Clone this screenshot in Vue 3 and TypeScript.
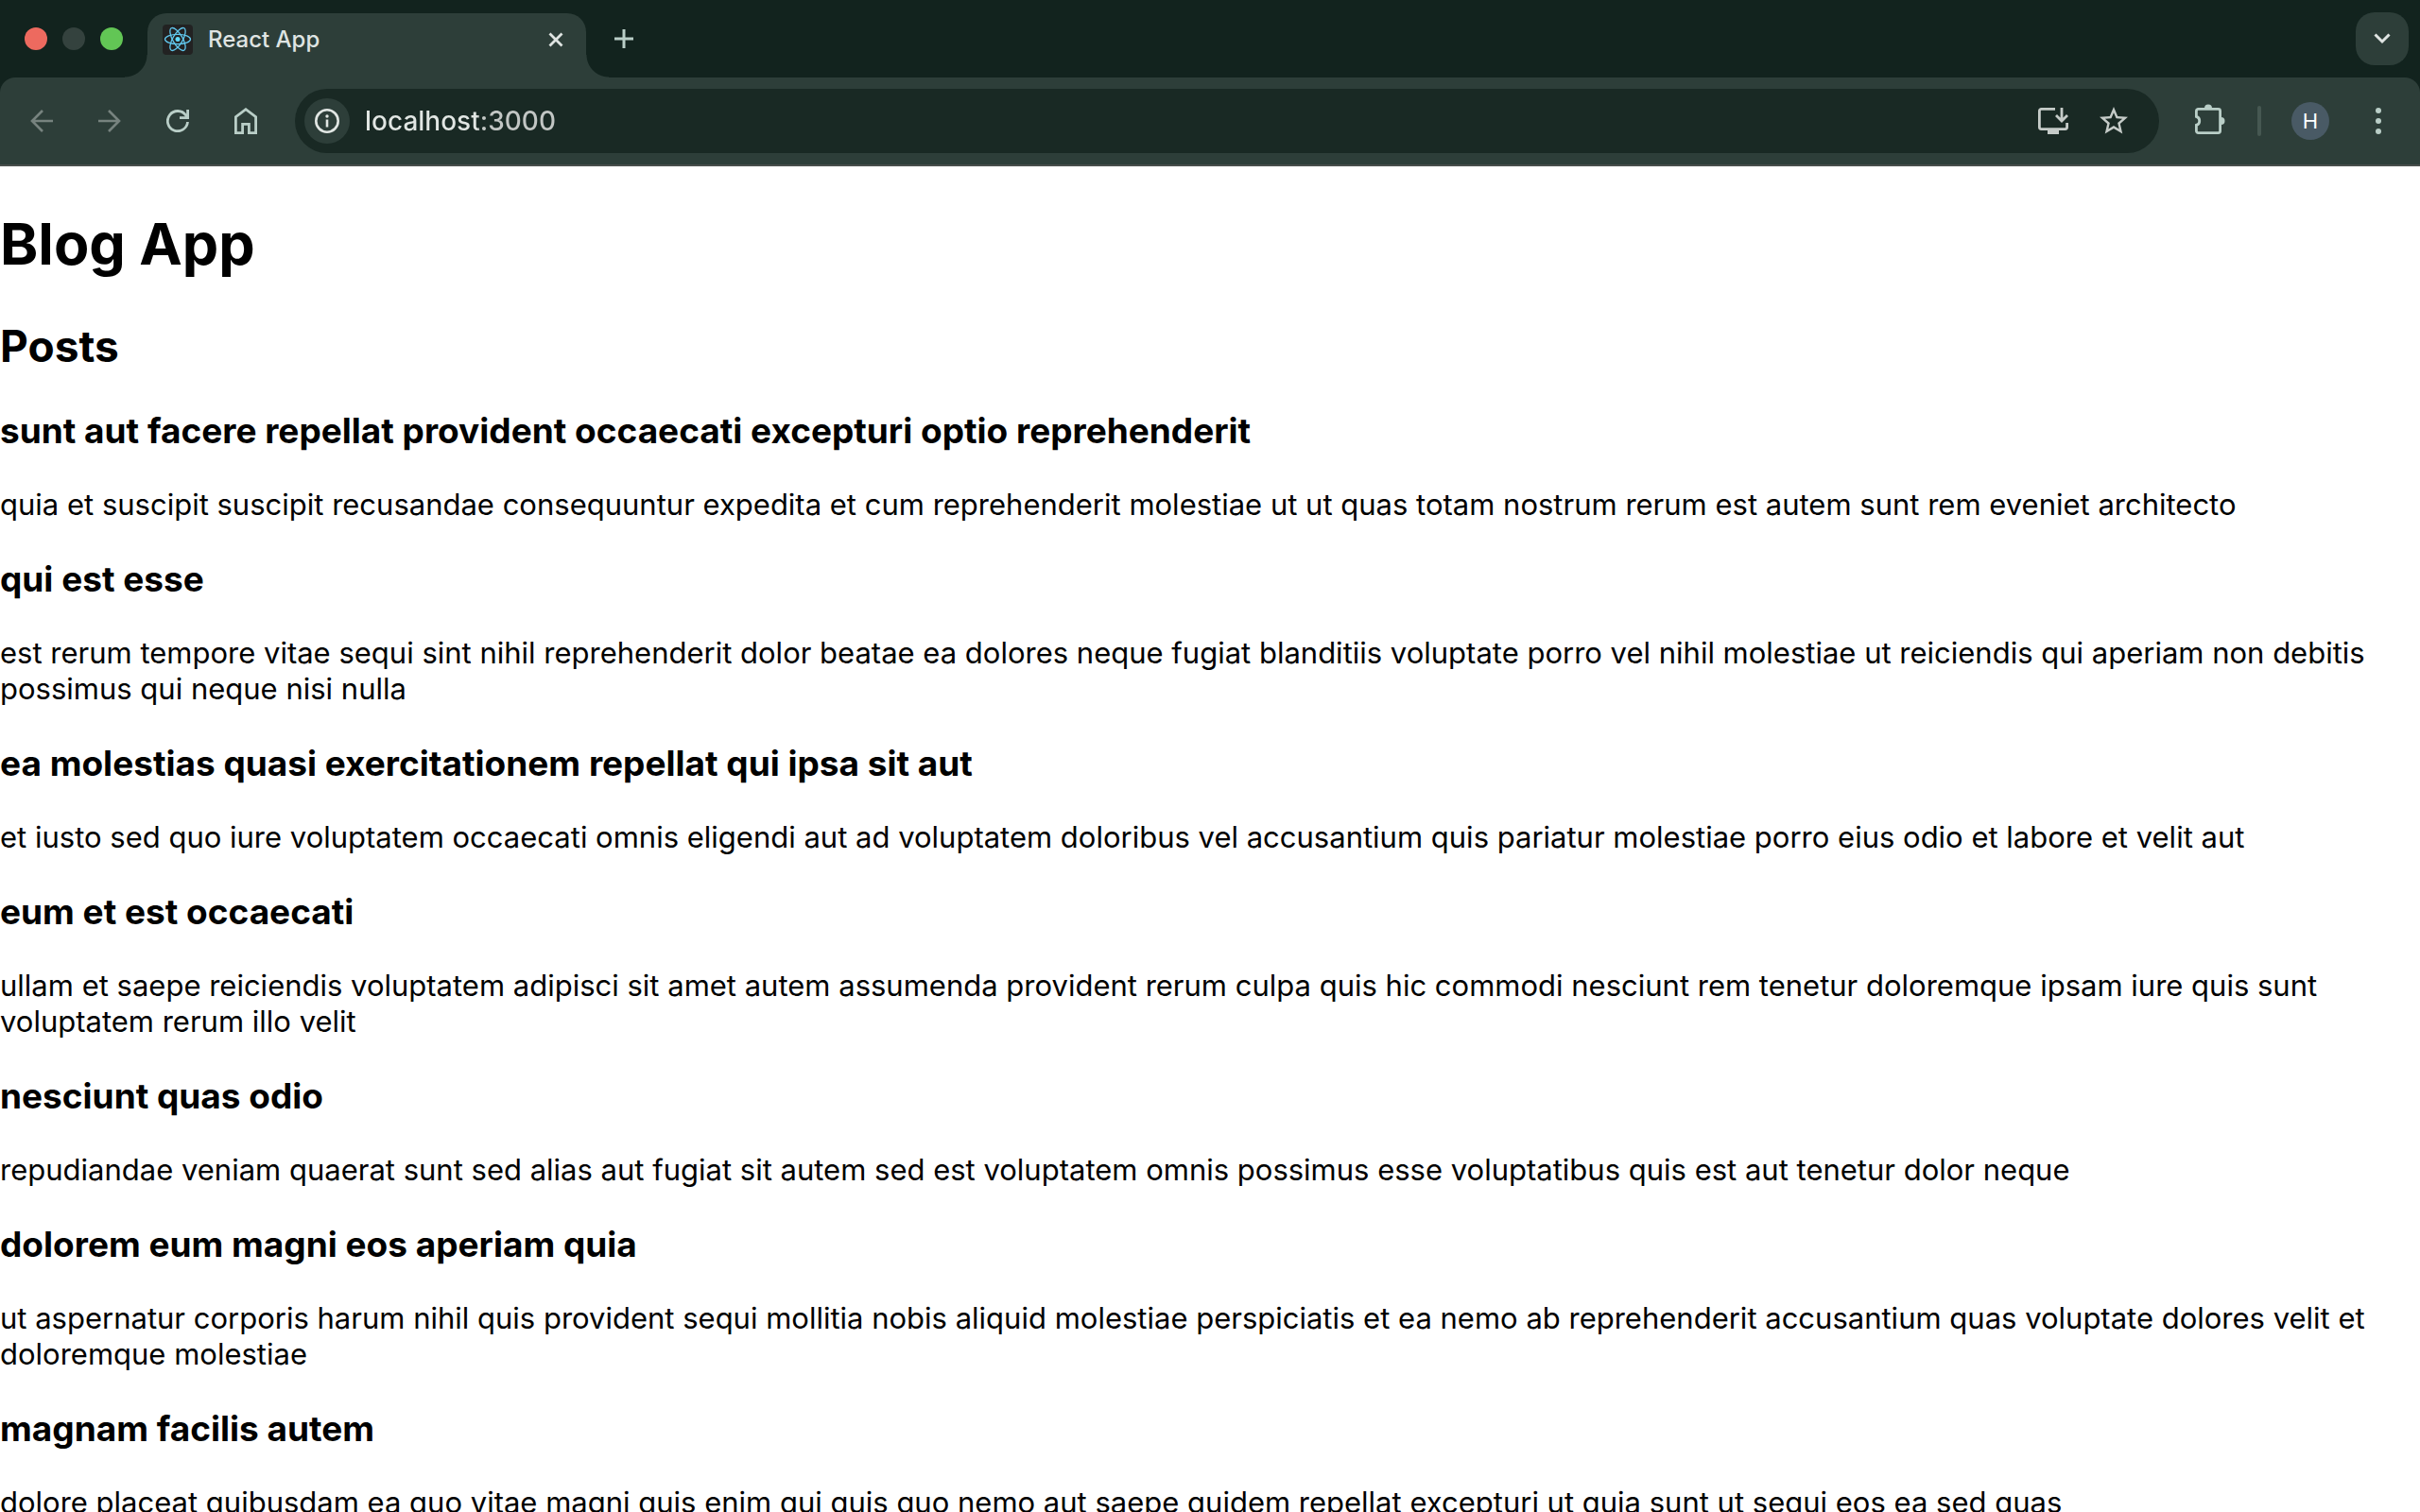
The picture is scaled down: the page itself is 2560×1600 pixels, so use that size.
<script setup lang="ts">
import { ref } from 'vue'

interface Post {
  title: string
  body: string
}

const address = ref('localhost:3000')

const posts: Post[] = [
  {
    title: 'sunt aut facere repellat provident occaecati excepturi optio reprehenderit',
    body: 'quia et suscipit suscipit recusandae consequuntur expedita et cum reprehenderit molestiae ut ut quas totam nostrum rerum est autem sunt rem eveniet architecto',
  },
  {
    title: 'qui est esse',
    body: 'est rerum tempore vitae sequi sint nihil reprehenderit dolor beatae ea dolores neque fugiat blanditiis voluptate porro vel nihil molestiae ut reiciendis qui aperiam non debitis possimus qui neque nisi nulla',
  },
  {
    title: 'ea molestias quasi exercitationem repellat qui ipsa sit aut',
    body: 'et iusto sed quo iure voluptatem occaecati omnis eligendi aut ad voluptatem doloribus vel accusantium quis pariatur molestiae porro eius odio et labore et velit aut',
  },
  {
    title: 'eum et est occaecati',
    body: 'ullam et saepe reiciendis voluptatem adipisci sit amet autem assumenda provident rerum culpa quis hic commodi nesciunt rem tenetur doloremque ipsam iure quis sunt voluptatem rerum illo velit',
  },
  {
    title: 'nesciunt quas odio',
    body: 'repudiandae veniam quaerat sunt sed alias aut fugiat sit autem sed est voluptatem omnis possimus esse voluptatibus quis est aut tenetur dolor neque',
  },
  {
    title: 'dolorem eum magni eos aperiam quia',
    body: 'ut aspernatur corporis harum nihil quis provident sequi mollitia nobis aliquid molestiae perspiciatis et ea nemo ab reprehenderit accusantium quas voluptate dolores velit et doloremque molestiae',
  },
  {
    title: 'magnam facilis autem',
    body: 'dolore placeat quibusdam ea quo vitae magni quis enim qui quis quo nemo aut saepe quidem repellat excepturi ut quia sunt ut sequi eos ea sed quas',
  },
]
</script>

<template>
  <div class="window">
    <header class="chrome">
      <div class="tab-strip">
        <div class="lights">
          <button class="light close" aria-label="Close window"></button>
          <button class="light minimize" aria-label="Minimize window"></button>
          <button class="light zoom" aria-label="Zoom window"></button>
        </div>
        <span class="flare left"></span>
        <div class="tab">
          <svg class="favicon" viewBox="0 0 32 32" width="32" height="32" aria-hidden="true">
            <rect width="32" height="32" rx="4" fill="#222" />
            <g fill="none" stroke="#61c8ee" stroke-width="1.3">
              <ellipse cx="16" cy="15.500" rx="13.500" ry="5.200" />
              <ellipse cx="16" cy="15.500" rx="13.500" ry="5.200" transform="rotate(60 16 15.500)" />
              <ellipse cx="16" cy="15.500" rx="13.500" ry="5.200" transform="rotate(120 16 15.500)" />
            </g>
            <circle cx="16" cy="15.500" r="2.500" fill="#61dafb" />
          </svg>
          <span class="tab-title">React App</span>
          <button class="tab-close" aria-label="Close tab">
            <svg viewBox="0 0 16 16" width="16" height="16"><path d="M1.500 1.500l13 13M14.500 1.500l-13 13" fill="none" stroke="currentColor" stroke-width="2.800" /></svg>
          </button>
        </div>
        <span class="flare right"></span>
        <button class="new-tab" aria-label="New tab">
          <svg viewBox="0 0 20 20" width="20" height="20"><path d="M10 0v20M0 10h20" fill="none" stroke="currentColor" stroke-width="3" /></svg>
        </button>
        <button class="tab-search" aria-label="Search tabs">
          <svg viewBox="0 0 18 12" width="18" height="12"><path d="M1.500 1.500L9 9l7.500-7.500" fill="none" stroke="currentColor" stroke-width="3" /></svg>
        </button>
      </div>

      <div class="toolbar">
        <nav class="nav">
          <button class="tool dim" aria-label="Back">
            <svg viewBox="0 0 24 24" width="24" height="24"><path d="M24 12H2M13 1L2 12l11 11" fill="none" stroke="currentColor" stroke-width="2.600" /></svg>
          </button>
          <button class="tool dim" aria-label="Forward">
            <svg viewBox="0 0 24 24" width="24" height="24"><path d="M0 12h22M11 1l11 11-11 11" fill="none" stroke="currentColor" stroke-width="2.600" /></svg>
          </button>
          <button class="tool" aria-label="Reload">
            <svg viewBox="0 0 24 24" width="24" height="24"><path d="M22.500 13A10.600 10.600 0 1 1 20.600 6L22.500 8.500M22.600 0v8.600H14" fill="none" stroke="currentColor" stroke-width="2.800" /></svg>
          </button>
          <button class="tool" aria-label="Home">
            <svg viewBox="0 0 24 28" width="24" height="28"><path d="M1.400 26.600V9.600L12 1.700l10.600 7.900v17h-7.200v-9.200H8.600v9.200z" fill="none" stroke="currentColor" stroke-width="2.800" /></svg>
          </button>
        </nav>

        <div class="omnibox">
          <button class="site-info" aria-label="View site information">
            <svg viewBox="0 0 26 26" width="26" height="26">
              <circle cx="13" cy="13" r="11.700" fill="none" stroke="currentColor" stroke-width="2.600" />
              <path d="M13 11.500v8" stroke="currentColor" stroke-width="2.600" />
              <circle cx="13" cy="8" r="1.700" fill="currentColor" />
            </svg>
          </button>
          <input v-model="address" class="address" type="text" aria-label="Address" spellcheck="false" />
          <button class="action" aria-label="Install app">
            <svg viewBox="0 0 32 28" width="32" height="28">
              <path d="M18 1.400H3.400a2 2 0 0 0-2 2v17.200a2 2 0 0 0 2 2h25.200a2 2 0 0 0 2-2V16" fill="none" stroke="currentColor" stroke-width="2.800" />
              <path d="M10 22h12v6H10z" fill="currentColor" />
              <path d="M25 0v14M19 8l6 6 6-6" fill="none" stroke="currentColor" stroke-width="2.800" />
            </svg>
          </button>
          <button class="action" aria-label="Bookmark this tab">
            <svg viewBox="0 0 24 24" width="36" height="36"><path d="M22 9.240l-7.190-.620L12 2 9.190 8.630 2 9.240l5.460 4.730L5.820 21 12 17.270 18.180 21l-1.630-7.030L22 9.240zM12 15.400l-3.760 2.270 1-4.280-3.320-2.880 4.380-.380L12 6.100l1.710 4.040 4.380.380-3.320 2.880 1 4.280L12 15.400z" fill="currentColor" /></svg>
          </button>
        </div>

        <button class="tool extensions" aria-label="Extensions">
          <svg viewBox="0 0 32 32" width="32" height="32">
            <path d="M3.400 5.400h21.200a2 2 0 0 1 2 2v21.200a2 2 0 0 1-2 2H3.400a2 2 0 0 1-2-2v-6.200a4.700 4.700 0 0 0 0-9V7.400a2 2 0 0 1 2-2z" fill="none" stroke="currentColor" stroke-width="2.800" />
            <path d="M10 4.500a4 4 0 0 1 8 0zM27.500 14a4 4 0 0 1 0 8z" fill="currentColor" />
          </svg>
        </button>
        <span class="divider"></span>
        <button class="avatar" aria-label="Profile H">H</button>
        <button class="tool" aria-label="Menu">
          <svg viewBox="0 0 6 28" width="6" height="28" fill="currentColor"><circle cx="3" cy="3" r="3" /><circle cx="3" cy="14" r="3" /><circle cx="3" cy="25" r="3" /></svg>
        </button>
      </div>
    </header>

    <main class="page">
      <h1>Blog App</h1>
      <h2>Posts</h2>
      <article v-for="post in posts" :key="post.title">
        <h3>{{ post.title }}</h3>
        <p>{{ post.body }}</p>
      </article>
    </main>
  </div>
</template>

<style>
body {
  margin: 0;
  background: #fff;
}
</style>

<style scoped>
.window {
  display: flex;
  flex-direction: column;
  height: 100vh;
  overflow: hidden;
  font-family: Inter, 'Liberation Sans', sans-serif;
  color: #000;
}

button {
  display: flex;
  align-items: center;
  justify-content: center;
  flex: none;
  margin: 0;
  padding: 0;
  border: 0;
  background: none;
  color: inherit;
  font: inherit;
}

svg {
  display: block;
  flex: none;
}

.chrome {
  flex: none;
  background: #12231e;
  color: #b9cec7;
}

.tab-strip {
  display: flex;
  align-items: center;
  height: 82px;
  padding: 0 12px 0 26px;
}

.lights {
  display: flex;
  gap: 16px;
}

.light {
  width: 24px;
  height: 24px;
  border-radius: 50%;
}

.close {
  background: #ed6a5f;
}

.minimize {
  background: #34423e;
}

.zoom {
  background: #62c655;
}

.flare {
  align-self: flex-end;
  width: 24px;
  height: 24px;
}

.flare.left {
  margin-left: 2px;
  background: radial-gradient(circle at 0 0, transparent 23px, #2d3e39 24px);
}

.flare.right {
  background: radial-gradient(circle at 100% 0, transparent 23px, #2d3e39 24px);
}

.tab {
  display: flex;
  align-items: center;
  align-self: flex-end;
  box-sizing: border-box;
  width: 464px;
  height: 68px;
  padding: 0 16px 12px;
  border-radius: 20px 20px 0 0;
  background: #2d3e39;
  color: #dfe4e2;
}

.tab-title {
  flex: 1;
  margin-left: 16px;
  font-size: 24px;
  font-weight: 450;
  line-height: 32px;
}

.tab-close {
  width: 32px;
  height: 32px;
}

.new-tab {
  width: 32px;
  height: 32px;
}

.tab-search {
  width: 56px;
  height: 56px;
  margin-left: auto;
  border-radius: 20px;
  background: #2d3e39;
  color: #dfe4e2;
}

.toolbar {
  display: flex;
  align-items: center;
  padding: 12px 16px;
  border-bottom: 2px solid #484e4b;
  border-radius: 16px 16px 0 0;
  background: #2d3e39;
}

.nav {
  display: flex;
  gap: 16px;
}

.tool {
  width: 56px;
  height: 56px;
}

.dim {
  color: #77837f;
}

.omnibox {
  display: flex;
  align-items: center;
  flex: 1;
  box-sizing: border-box;
  height: 68px;
  margin: 0 26px 0 24px;
  padding: 0 16px 0 10px;
  border-radius: 34px;
  background: #192924;
  color: #c5cbc8;
}

.site-info {
  width: 48px;
  height: 48px;
  border-radius: 50%;
  background: #2d3e39;
  color: #e1e6e3;
}

.address {
  flex: 1;
  min-width: 0;
  height: 48px;
  margin: 0 0 0 16px;
  padding: 0;
  border: 0;
  outline: 0;
  background: linear-gradient(to right, #e1e6e3 119px, #c2c6c4 119px) text;
  color: transparent;
  font: 450 28px/48px Inter, 'Liberation Sans', sans-serif;
}

.action {
  width: 64px;
  height: 64px;
}

.extensions svg {
  margin-bottom: 4px;
}

.divider {
  width: 4px;
  height: 32px;
  margin: 0 32px 0 22px;
  border-radius: 2px;
  background: #465852;
}

.avatar {
  width: 40px;
  height: 40px;
  margin-right: 24px;
  border-radius: 50%;
  background: #495a65;
  color: #fff;
  font-size: 22px;
}

.page {
  flex: 1;
  min-height: 0;
  overflow: hidden;
}

h1 {
  margin: 44px 0 42px;
  font-size: 61px;
  line-height: 76px;
}

h2 {
  margin: 42px 0 38px;
  font-size: 46px;
  line-height: 57px;
}

h3 {
  margin: 37px 0;
  font-size: 37px;
  line-height: 45px;
}

p {
  margin: 37px 0;
  font-size: 31px;
  line-height: 38px;
}
</style>
